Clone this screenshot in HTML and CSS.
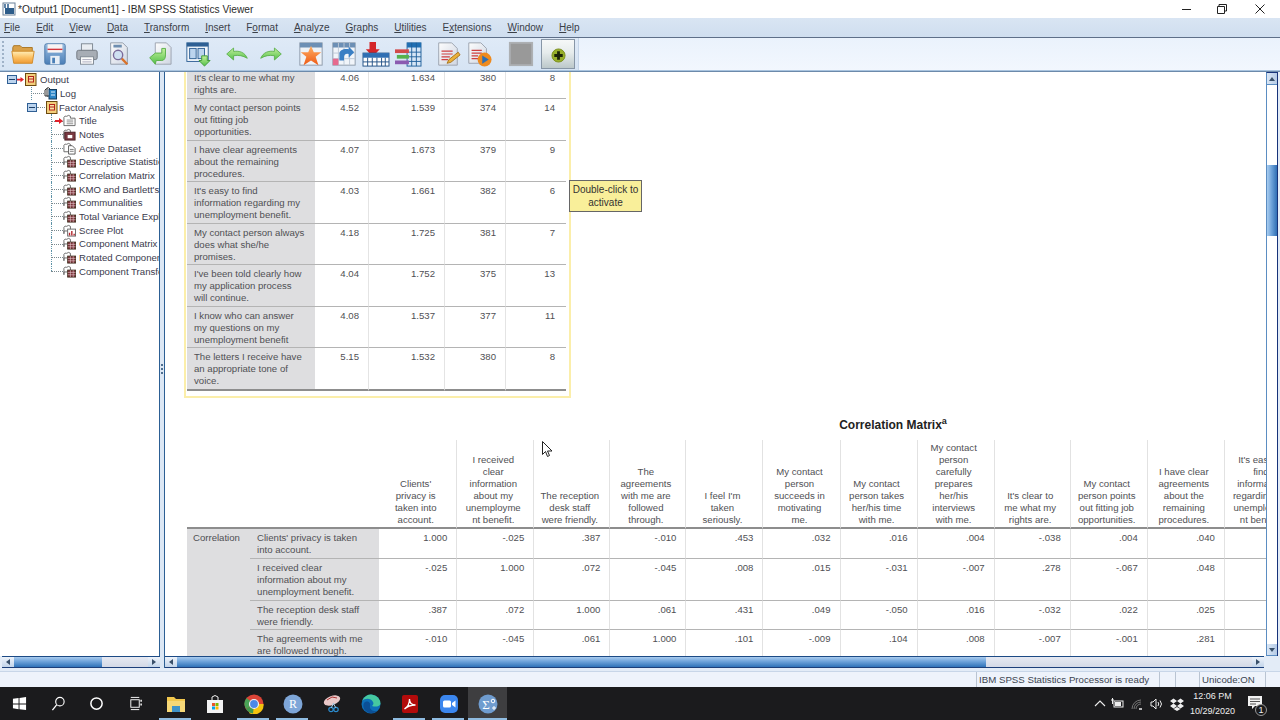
FILE: index.html
```html
<!DOCTYPE html>
<html lang="en">
<head>
<meta charset="utf-8">
<title>*Output1 [Document1] - IBM SPSS Statistics Viewer</title>
<link rel="stylesheet" href="styles.css">
</head>
<body>
<svg class="defs" width="0" height="0" aria-hidden="true">
  <defs>
    <linearGradient id="gFolder" x1="0" y1="0" x2="0" y2="1"><stop offset="0" stop-color="#ffeeb8"/><stop offset=".5" stop-color="#fcc266"/><stop offset="1" stop-color="#ee9a34"/></linearGradient>
    <linearGradient id="gSave" x1="0" y1="0" x2="0" y2="1"><stop offset="0" stop-color="#9cbfe3"/><stop offset="1" stop-color="#4b7fb7"/></linearGradient>
    <linearGradient id="gGreen" x1="0" y1="0" x2="0" y2="1"><stop offset="0" stop-color="#c4f09c"/><stop offset="1" stop-color="#52c04a"/></linearGradient>
    <linearGradient id="gPage" x1="0" y1="0" x2="1" y2="1"><stop offset="0" stop-color="#fdfdfd"/><stop offset="1" stop-color="#cfd6e2"/></linearGradient>
    <linearGradient id="gOrange" x1="0" y1="0" x2="0" y2="1"><stop offset="0" stop-color="#ffb066"/><stop offset="1" stop-color="#ee5a14"/></linearGradient>
    <symbol id="t-group" viewBox="0 0 13 13"><rect x="1.500" y=".5" width="10.500" height="12" fill="#f2cf7c" stroke="#6d4a10"/><rect x="4.500" y="3.500" width="5" height="5.500" fill="#f7e3a6" stroke="#b4231a"/><path d="M5 6h4" stroke="#b4231a"/></symbol>
    <symbol id="t-log" viewBox="0 0 13 13"><path d="M1 9V3Q2 1 4 2V9Z" fill="#fff" stroke="#333"/><path d="M3 1Q5 0 6 2V9H3Z" fill="#fff" stroke="#333"/><rect x="5" y="2.500" width="7.500" height="9.500" fill="#2b85c6" stroke="#123a5c"/><path d="M7 5h4M7 8h4" stroke="#dff1ff"/></symbol>
    <symbol id="t-title" viewBox="0 0 14 13"><path d="M1 11V3Q2 1 4 2Q6 0 8 2V4H13V12H1Z" fill="#fff" stroke="#666"/><path d="M4 6h7M4 8h7M4 10h7" stroke="#8a8a8a"/></symbol>
    <symbol id="t-notes" viewBox="0 0 14 13"><path d="M1 11V3Q2 1 4 2Q6 0 8 2V5H1Z" fill="#fff" stroke="#666"/><rect x="2" y="4" width="11" height="8.500" fill="#7a3941" stroke="#4a2026"/><rect x="5" y="7" width="5" height="3.500" fill="#fff"/></symbol>
    <symbol id="t-text" viewBox="0 0 14 13"><path d="M1 10V3Q2 1 4 2Q6 0 8 2V10Z" fill="#fff" stroke="#666"/><path d="M6 3.500h4l3 3v6H6Z" fill="#fff" stroke="#555"/><path d="M7.500 7.500h4M7.500 9.500h4" stroke="#777"/></symbol>
    <symbol id="t-table" viewBox="0 0 14 13"><path d="M1 10V3Q2 1 4 2Q6 0 8 2V7H1Z" fill="#fff" stroke="#666"/><rect x="5" y="5" width="8.500" height="7.500" fill="#7a2f38" stroke="#432"/><path d="M5 7.500h8.500M5 10h8.500M8 5v7.500M11 5v7.500" stroke="#e9d4d4" stroke-width=".6"/></symbol>
    <symbol id="t-plot" viewBox="0 0 14 13"><path d="M1 10V3Q2 1 4 2Q6 0 8 2V7H1Z" fill="#fff" stroke="#666"/><rect x="5" y="5" width="8.500" height="7.500" fill="#fff" stroke="#666"/><path d="M7 12V9M9.500 12V7M12 12V10" stroke="#b3262c" stroke-width="1.500"/></symbol>
    <symbol id="t-arrow" viewBox="0 0 8 8"><path d="M0 3h4V1l4 3-4 3V5H0Z" fill="#e0202a"/></symbol>
  </defs>
</svg>

<header class="titlebar">
  <svg class="app-ico" viewBox="0 0 14 14" aria-hidden="true"><rect x="1" y="1" width="12" height="12" fill="#fff" stroke="#6b8199"/><rect x="3" y="6" width="9" height="6" fill="#2c5c8a"/><path d="M3 2v4M6 2v4" stroke="#2c5c8a" stroke-width="1.500"/></svg>
  <span class="title-text">*Output1 [Document1] - IBM SPSS Statistics Viewer</span>
  <div class="win-btns">
    <svg class="win-btn win-min" viewBox="0 0 12 12" aria-hidden="true"><path d="M1 6.500h9" stroke="#222"/></svg>
    <svg class="win-btn" viewBox="0 0 12 12" aria-hidden="true"><path d="M3 3V1.500h7.500V8H9M1.500 3.500H8.500V10.500H1.500Z" fill="none" stroke="#222"/></svg>
    <svg class="win-btn" viewBox="0 0 12 12" aria-hidden="true"><path d="M1.500 1.500l9 9M10.500 1.500l-9 9" stroke="#222"/></svg>
  </div>
</header>

<nav class="menubar">
  <span><u>F</u>ile</span><span><u>E</u>dit</span><span><u>V</u>iew</span><span><u>D</u>ata</span><span><u>T</u>ransform</span><span><u>I</u>nsert</span><span>F<u>o</u>rmat</span><span><u>A</u>nalyze</span><span><u>G</u>raphs</span><span><u>U</u>tilities</span><span>E<u>x</u>tensions</span><span><u>W</u>indow</span><span><u>H</u>elp</span>
</nav>

<div class="toolbar">
  <div class="tools">
    <i class="grip"></i>
    <svg class="tool t1" viewBox="0 0 28 28" aria-hidden="true"><path d="M3 7l1-2h7l2 2h11v5H3Z" fill="#d9a048" stroke="#a87420"/><path d="M2 11h24l-2 13H4Z" fill="url(#gFolder)" stroke="#d08a28"/></svg>
    <svg class="tool t2" viewBox="0 0 28 28" aria-hidden="true"><rect x="3" y="3" width="22" height="22" rx="2" fill="url(#gSave)" stroke="#4b78a8"/><rect x="6" y="3.500" width="16" height="9" fill="#f7f4f4"/><path d="M6 9h16" stroke="#d2333c" stroke-width="1.500"/><rect x="9" y="16" width="10" height="9" fill="#e7eef6"/><rect x="11" y="18" width="3" height="6" fill="#4b7fb7"/></svg>
    <svg class="tool t3" viewBox="0 0 28 28" aria-hidden="true"><rect x="8" y="3" width="12" height="8" fill="#e9edf2" stroke="#7d8791"/><rect x="3" y="10" width="22" height="10" rx="2" fill="#a7adb5" stroke="#6f767e"/><rect x="7" y="17" width="14" height="8" fill="#fbfbfb" stroke="#7d8791"/><path d="M9 20h10M9 22.500h10" stroke="#aab"/></svg>
    <svg class="tool t4" viewBox="0 0 28 28" aria-hidden="true"><path d="M5 2h13l5 5v18H5Z" fill="url(#gPage)" stroke="#8f98a5"/><rect x="8" y="4" width="9" height="3" fill="#6e8eb0"/><circle cx="13" cy="15" r="5" fill="#cfe0f2" stroke="#7a6a9a" stroke-width="1.500"/><path d="M17 19l6 6" stroke="#d9722a" stroke-width="2.500"/></svg>
    <svg class="tool t5" viewBox="0 0 28 28" aria-hidden="true"><path d="M10 2h12l5 5v18H10Z" fill="url(#gPage)" stroke="#9aa2ae"/><path d="M17 8v5h-7l-6 5 6 7 1-4h6c3 0 4-3 4-6V8Z" fill="url(#gGreen)" stroke="#5aae4a"/></svg>
    <svg class="tool t6" viewBox="0 0 28 28" aria-hidden="true"><rect x="2" y="2" width="23" height="20" fill="#f2f6fb" stroke="#2d5f94"/><rect x="2" y="2" width="23" height="4" fill="#2d5f94"/><rect x="5" y="8" width="7" height="11" fill="#bcd4ee" stroke="#2d5f94"/><rect x="14" y="8" width="7" height="11" fill="#bcd4ee" stroke="#2d5f94"/><path d="M18 16h6v5h3l-6 6-6-6h3Z" fill="url(#gGreen)" stroke="#3c9a36"/></svg>
    <svg class="tool t7" viewBox="0 0 28 28" aria-hidden="true"><path d="M2 14l8-7v4c7-1 13 1 16 8-5-3-10-4-16-3v5Z" fill="url(#gGreen)" stroke="#5aae4a"/></svg>
    <svg class="tool t8" viewBox="0 0 28 28" aria-hidden="true"><path d="M26 14l-8-7v4c-7-1-13 1-16 8 5-3 10-4 16-3v5Z" fill="url(#gGreen)" stroke="#5aae4a"/></svg>
    <svg class="tool t9" viewBox="0 0 28 28" aria-hidden="true"><rect x="2" y="2" width="24" height="24" fill="#eef2f7" stroke="#8c99a8"/><rect x="2" y="2" width="24" height="5" fill="#6c8fb5"/><path d="M14 5l3 7h8l-6 5 3 9-8-5-8 5 3-9-6-5h8Z" fill="url(#gOrange)"/></svg>
    <svg class="tool t10" viewBox="0 0 28 28" aria-hidden="true"><rect x="2" y="2" width="24" height="24" fill="#f1f5fa" stroke="#8c99a8"/><rect x="2" y="2" width="24" height="5" fill="#6c8fb5"/><path d="M2 13h24M2 19h24M8 2v24M14 2v24M20 2v24" stroke="#bcc8d6"/><rect x="2" y="19" width="6" height="7" fill="#e66a8e"/><path d="M9 21v-7c0-4 5-6 10-5V6l6 6-6 6v-4c-3-1-5 1-5 3v4Z" fill="#3a7fc4"/></svg>
    <svg class="tool t11" viewBox="0 0 30 28" aria-hidden="true"><path d="M8 1h7v8h4l-7.500 8L4 9h4Z" fill="#d4262a"/><rect x="1" y="13" width="28" height="14" fill="#fff" stroke="#1f4f85"/><rect x="1" y="13" width="28" height="5" fill="#2f6fb3"/><path d="M1 22.500h28M6 18v9M11 18v9M16 18v9M21 18v9M25 18v9" stroke="#1f4f85"/></svg>
    <svg class="tool t12" viewBox="0 0 30 28" aria-hidden="true"><rect x="14" y="2" width="15" height="25" fill="#d6e6f6" stroke="#1f5f9a"/><rect x="14" y="2" width="15" height="5" fill="#1f6fb3"/><path d="M14 12h15M14 17h15M14 22h15M19 2v25M24 2v25" stroke="#1f5f9a"/><rect x="1" y="9" width="15" height="4" fill="#d24a4a"/><rect x="3" y="15" width="13" height="4" fill="#56b14e"/><rect x="1" y="21" width="15" height="4" fill="#8b5bb0"/></svg>
    <svg class="tool t13" viewBox="0 0 28 28" aria-hidden="true"><path d="M4 2h14l6 6v18H4Z" fill="url(#gPage)" stroke="#9aa2ae"/><path d="M7 11h12M7 14h12M7 17h9M7 20h7" stroke="#cf4040" stroke-width="1.300"/><path d="M13 24l2-4 10-8 2 3-10 8Z" fill="#eab13a" stroke="#a9741c"/></svg>
    <svg class="tool t14" viewBox="0 0 28 28" aria-hidden="true"><path d="M3 2h13l6 6v16H3Z" fill="url(#gPage)" stroke="#9aa2ae"/><path d="M6 10h11M6 13h11M6 16h7M6 19h7" stroke="#cf4040" stroke-width="1.300"/><circle cx="20" cy="20" r="7.500" fill="#ee8a1e"/><path d="M17.500 15.500l7 4.500-7 4.500Z" fill="#2f6fb3"/></svg>
    <svg class="tool t15" viewBox="0 0 28 28" aria-hidden="true"><rect x="2" y="2" width="24" height="24" fill="#999" stroke="#adb0b3" stroke-width="2"/></svg>
    <div class="tool-active"><svg class="plus" viewBox="0 0 16 16" aria-hidden="true"><circle cx="8" cy="8" r="7" fill="#98b02a" stroke="#7c8f20"/><path d="M8 3.500v9M3.500 8h9" stroke="#1c2408" stroke-width="3"/></svg></div>
  </div>
</div>

<main class="main">
  <aside class="left">
    <div class="tree">
      <div class="row root"><svg class="toggle" viewBox="0 0 10 9" aria-hidden="true"><rect x=".5" y=".5" width="9" height="8" fill="#bcd4ee" stroke="#2f5f94"/><path d="M2 4.500h6" stroke="#1d3f66"/></svg><svg class="ra" aria-hidden="true"><use href="#t-arrow"/></svg><svg class="ic" aria-hidden="true"><use href="#t-group"/></svg><span class="lb">Output</span></div>
      <div class="row log"><i class="guide"></i><svg class="ic" aria-hidden="true"><use href="#t-log"/></svg><span class="lb">Log</span></div>
      <div class="row group"><svg class="toggle" viewBox="0 0 10 9" aria-hidden="true"><rect x=".5" y=".5" width="9" height="8" fill="#bcd4ee" stroke="#2f5f94"/><path d="M2 4.500h6" stroke="#1d3f66"/></svg><i class="dash"></i><svg class="ic" aria-hidden="true"><use href="#t-group"/></svg><span class="lb">Factor Analysis</span></div>
      <div class="row leaf"><i class="guide"><svg class="ga" aria-hidden="true"><use href="#t-arrow"/></svg></i><svg class="ic" aria-hidden="true"><use href="#t-title"/></svg><span class="lb">Title</span></div>
      <div class="row leaf"><i class="guide"></i><svg class="ic" aria-hidden="true"><use href="#t-notes"/></svg><span class="lb">Notes</span></div>
      <div class="row leaf"><i class="guide"></i><svg class="ic" aria-hidden="true"><use href="#t-text"/></svg><span class="lb">Active Dataset</span></div>
      <div class="row leaf"><i class="guide"></i><svg class="ic" aria-hidden="true"><use href="#t-table"/></svg><span class="lb">Descriptive Statistics</span></div>
      <div class="row leaf"><i class="guide"></i><svg class="ic" aria-hidden="true"><use href="#t-table"/></svg><span class="lb">Correlation Matrix</span></div>
      <div class="row leaf"><i class="guide"></i><svg class="ic" aria-hidden="true"><use href="#t-table"/></svg><span class="lb">KMO and Bartlett's Test</span></div>
      <div class="row leaf"><i class="guide"></i><svg class="ic" aria-hidden="true"><use href="#t-table"/></svg><span class="lb">Communalities</span></div>
      <div class="row leaf"><i class="guide"></i><svg class="ic" aria-hidden="true"><use href="#t-table"/></svg><span class="lb">Total Variance Explained</span></div>
      <div class="row leaf"><i class="guide"></i><svg class="ic" aria-hidden="true"><use href="#t-plot"/></svg><span class="lb">Scree Plot</span></div>
      <div class="row leaf"><i class="guide"></i><svg class="ic" aria-hidden="true"><use href="#t-table"/></svg><span class="lb">Component Matrix</span></div>
      <div class="row leaf"><i class="guide"></i><svg class="ic" aria-hidden="true"><use href="#t-table"/></svg><span class="lb">Rotated Component Matrix</span></div>
      <div class="row leaf"><i class="guide last"></i><svg class="ic" aria-hidden="true"><use href="#t-table"/></svg><span class="lb">Component Transformation</span></div>
    </div>
    <div class="hscroll">
      <span class="sb-btn"><i class="tri-l"></i></span><span class="sb-blue left-blue"></span><span class="sb-light"></span><span class="sb-btn"><i class="tri-r"></i></span>
    </div>
  </aside>
  <div class="splitter"><i></i></div>
  <section class="right">
    <div class="right-top">
      <div class="viewer">
        <div class="doc">
          <div class="active-box">
            <table class="t1-table">
              <colgroup><col class="c128"><col class="c54"><col class="c76"><col class="c61"><col class="c60"></colgroup>
              <tbody>
                <tr><th>It's clear to me what my<br>rights are.</th><td>4.06</td><td>1.634</td><td>380</td><td>8</td></tr>
                <tr><th>My contact person points<br>out fitting job<br>opportunities.</th><td>4.52</td><td>1.539</td><td>374</td><td>14</td></tr>
                <tr><th>I have clear agreements<br>about the remaining<br>procedures.</th><td>4.07</td><td>1.673</td><td>379</td><td>9</td></tr>
                <tr><th>It's easy to find<br>information regarding my<br>unemployment benefit.</th><td>4.03</td><td>1.661</td><td>382</td><td>6</td></tr>
                <tr><th>My contact person always<br>does what she/he<br>promises.</th><td>4.18</td><td>1.725</td><td>381</td><td>7</td></tr>
                <tr><th>I've been told clearly how<br>my application process<br>will continue.</th><td>4.04</td><td>1.752</td><td>375</td><td>13</td></tr>
                <tr><th>I know who can answer<br>my questions on my<br>unemployment benefit</th><td>4.08</td><td>1.537</td><td>377</td><td>11</td></tr>
                <tr><th>The letters I receive have<br>an appropriate tone of<br>voice.</th><td>5.15</td><td>1.532</td><td>380</td><td>8</td></tr>
              </tbody>
            </table>
            <div class="tip">Double-click to<br>activate</div>
          </div>
          <h2 class="corr-title">Correlation Matrix<sup>a</sup></h2>
          <table class="corr">
            <colgroup><col class="c63"><col class="c129"><col class="c78"><col class="c77"><col class="c76"><col class="c76"><col class="c77"><col class="c77"><col class="c77"><col class="c77"><col class="c76"><col class="c77"><col class="c77"><col class="c77"></colgroup>
            <thead>
              <tr>
                <th class="blank" colspan="2"></th>
                <th>Clients'<br>privacy is<br>taken into<br>account.</th>
                <th>I received<br>clear<br>information<br>about my<br>unemployme<br>nt benefit.</th>
                <th>The reception<br>desk staff<br>were friendly.</th>
                <th>The<br>agreements<br>with me are<br>followed<br>through.</th>
                <th>I feel I'm<br>taken<br>seriously.</th>
                <th>My contact<br>person<br>succeeds in<br>motivating<br>me.</th>
                <th>My contact<br>person takes<br>her/his time<br>with me.</th>
                <th>My contact<br>person<br>carefully<br>prepares<br>her/his<br>interviews<br>with me.</th>
                <th>It's clear to<br>me what my<br>rights are.</th>
                <th>My contact<br>person points<br>out fitting job<br>opportunities.</th>
                <th>I have clear<br>agreements<br>about the<br>remaining<br>procedures.</th>
                <th>It's easy to<br>find<br>information<br>regarding my<br>unemployme<br>nt benefit.</th>
              </tr>
            </thead>
            <tbody>
              <tr class="r2a"><th class="grp" rowspan="4">Correlation</th><th class="lab">Clients' privacy is taken<br>into account.</th><td>1.000</td><td>-.025</td><td>.387</td><td>-.010</td><td>.453</td><td>.032</td><td>.016</td><td>.004</td><td>-.038</td><td>.004</td><td>.040</td><td></td></tr>
              <tr class="r3"><th class="lab">I received clear<br>information about my<br>unemployment benefit.</th><td>-.025</td><td>1.000</td><td>.072</td><td>-.045</td><td>.008</td><td>.015</td><td>-.031</td><td>-.007</td><td>.278</td><td>-.067</td><td>.048</td><td></td></tr>
              <tr class="r2"><th class="lab">The reception desk staff<br>were friendly.</th><td>.387</td><td>.072</td><td>1.000</td><td>.061</td><td>.431</td><td>.049</td><td>-.050</td><td>.016</td><td>-.032</td><td>.022</td><td>.025</td><td></td></tr>
              <tr class="r2"><th class="lab">The agreements with me<br>are followed through.</th><td>-.010</td><td>-.045</td><td>.061</td><td>1.000</td><td>.101</td><td>-.009</td><td>.104</td><td>.008</td><td>-.007</td><td>-.001</td><td>.281</td><td></td></tr>
            </tbody>
          </table>
        </div>
        <svg class="cursor" viewBox="0 0 11 17" aria-hidden="true"><path d="M.5.500v13l3-3 2 5 2-1-2-4.500h4.500Z" fill="#fff" stroke="#222"/></svg>
      </div>
      <div class="vscroll">
        <span class="vb-btn"><i class="tri-u"></i></span><span class="vb-white vb-a"></span><span class="vb-blue"></span><span class="vb-white vb-b"></span><span class="vb-btn"><i class="tri-d"></i></span>
      </div>
    </div>
    <div class="hscroll hscroll-r">
      <span class="sb-btn"><i class="tri-l"></i></span><span class="sb-blue right-blue"></span><span class="sb-light"></span><span class="sb-btn"><i class="tri-r"></i></span>
    </div>
  </section>
</main>

<footer class="status">
  <span class="st st-a">IBM SPSS Statistics Processor is ready</span><span class="st st-b"></span><span class="st st-c"></span><span class="st st-d">Unicode:ON</span>
</footer>

<div class="taskbar">
  <div class="task-left">
    <span class="ti"><svg class="ticon" viewBox="0 0 16 16" aria-hidden="true"><path d="M1 3l6-1v6H1ZM8 2l7-1v7H8ZM1 9h6v5l-6-1ZM8 9h7v6l-7-1Z" fill="#fff"/></svg></span>
    <span class="ti"><svg class="ticon" viewBox="0 0 16 16" aria-hidden="true"><circle cx="9.500" cy="6" r="4.500" fill="none" stroke="#fff" stroke-width="1.200"/><path d="M6 9.500L1.500 15" stroke="#fff" stroke-width="1.400"/></svg></span>
    <span class="ti ti-tight"><svg class="ticon" viewBox="0 0 16 16" aria-hidden="true"><circle cx="8" cy="8" r="6" fill="none" stroke="#fff" stroke-width="1.600"/></svg></span>
    <span class="ti ti-tight"><svg class="ticon" viewBox="0 0 16 16" aria-hidden="true"><path d="M3 1.500h9M3 14.500h9" stroke="#fff"/><rect x="3" y="4" width="9" height="8" fill="none" stroke="#fff"/><path d="M14 4v2M14 8v2" stroke="#fff" stroke-width="1.500"/></svg></span>
    <span class="ti on"><svg class="ticon big" viewBox="0 0 20 20" aria-hidden="true"><path d="M1 3h7l2 2h9v13H1Z" fill="#f2c84e"/><rect x="1" y="7" width="18" height="11" fill="#f6d877"/><rect x="6" y="12" width="8" height="6" fill="#3f93c9"/></svg></span>
    <span class="ti"><svg class="ticon big" viewBox="0 0 20 20" aria-hidden="true"><path d="M2 6h16v13H2Z" fill="#f3f3f3"/><path d="M7 6V3q3-3 6 0v3" fill="none" stroke="#f3f3f3"/><rect x="7" y="9" width="3" height="3" fill="#e8542a"/><rect x="10.500" y="9" width="3" height="3" fill="#7fba00"/><rect x="7" y="12.500" width="3" height="3" fill="#00a4ef"/><rect x="10.500" y="12.500" width="3" height="3" fill="#ffb900"/></svg></span>
    <span class="ti on"><svg class="ticon big" viewBox="0 0 20 20" aria-hidden="true"><circle cx="10" cy="10" r="9.500" fill="#db4437"/><path d="M10 10L2 15A9.500 9.500 0 0 1 2.600 4L10 10Z" fill="#4aa356"/><path d="M10 10l-5 9A9.500 9.500 0 0 0 19.500 10Z" fill="#f4c20d"/><path d="M10 10l-8 5A9.500 9.500 0 0 0 9 19.500Z" fill="#3f9a4e"/><circle cx="10" cy="10" r="4.500" fill="#4a88e8" stroke="#eee" stroke-width="1.200"/></svg></span>
    <span class="ti on"><svg class="ticon big" viewBox="0 0 20 20" aria-hidden="true"><circle cx="10" cy="10" r="9.500" fill="#7ea6d8"/><text x="10" y="14" text-anchor="middle" class="r-letter">R</text></svg></span>
    <span class="ti"><svg class="ticon big" viewBox="0 0 20 20" aria-hidden="true"><ellipse cx="10" cy="6.500" rx="8.500" ry="4.500" fill="#e9c8c8" transform="rotate(-20 10 6.500)"/><path d="M5 6l5-3 5 1" fill="none" stroke="#a33"/><circle cx="9" cy="15.500" r="2.200" fill="none" stroke="#2c8dd0" stroke-width="1.200"/><circle cx="14" cy="15.500" r="2.200" fill="none" stroke="#2c8dd0" stroke-width="1.200"/><path d="M9 14l3-5M14 14l-3-5" stroke="#9fc6e0"/></svg></span>
    <span class="ti"><svg class="ticon big" viewBox="0 0 20 20" aria-hidden="true"><circle cx="10" cy="10" r="9.500" fill="#0d6fb8"/><path d="M19.500 10A9.500 9.500 0 0 0 1 7c3-3 9-3 11 1 1 2 0 3-1 4 3 1 7 1 8.500-2Z" fill="#46c9a0"/><path d="M3 9c3-3 7-1 6 3-1 3 3 6 7 5-3 3-8 3-11 0-3-2-3-6-2-8Z" fill="#0b4f95"/></svg></span>
    <span class="ti on2"><svg class="ticon big" viewBox="0 0 20 20" aria-hidden="true"><rect x="2" y="1" width="16" height="18" rx="2" fill="#b30b0b"/><path d="M4.500 15c3-2 5-6 5-10 0 4 2 6 6 6-4 0-8 1-11 4Z" fill="none" stroke="#fff" stroke-width="1.300"/></svg></span>
    <span class="ti on2"><svg class="ticon big" viewBox="0 0 20 20" aria-hidden="true"><rect x="1" y="1" width="18" height="18" rx="5" fill="#3b86ee"/><rect x="4" y="6.500" width="8" height="7" rx="1.500" fill="#fff"/><path d="M13 9l3.500-2.500v7L13 11Z" fill="#fff"/></svg></span>
    <span class="ti active"><svg class="ticon big" viewBox="0 0 20 20" aria-hidden="true"><circle cx="10" cy="10" r="9.500" fill="#6f9ccf"/><text x="8" y="14.500" text-anchor="middle" class="sigma">Σ</text><circle cx="15" cy="7" r="1.800" fill="none" stroke="#fff"/><path d="M14 14h4M16 12v4" stroke="#fff"/></svg></span>
  </div>
  <div class="tray">
    <svg class="tray-i tray-chev" viewBox="0 0 14 14" aria-hidden="true"><path d="M2 9l5-5 5 5" fill="none" stroke="#eee" stroke-width="1.100"/></svg>
    <svg class="tray-i" viewBox="0 0 14 14" aria-hidden="true"><rect x="4" y="4" width="9" height="6" fill="none" stroke="#eee"/><rect x="5" y="5" width="6" height="4" fill="#eee"/><path d="M1 3h3M2.500 1v6" stroke="#eee"/></svg>
    <svg class="tray-i" viewBox="0 0 14 14" aria-hidden="true"><path d="M2 12a9 9 0 0 1 9-9M4 12a7 7 0 0 1 7-7M6 12a5 5 0 0 1 5-5" fill="none" stroke="#777"/><path d="M9 12h3" stroke="#eee" stroke-width="1.500"/></svg>
    <svg class="tray-i" viewBox="0 0 14 14" aria-hidden="true"><path d="M1 5h2l3-3v10L3 9H1Z" fill="none" stroke="#eee"/><path d="M8 5q1.500 2 0 4M10 3.500q3 3.500 0 7" fill="none" stroke="#eee"/></svg>
    <svg class="tray-i" viewBox="0 0 14 14" aria-hidden="true"><path d="M3.500 1.500L7 4 3.500 6.500 0 4ZM10.500 1.500L14 4l-3.500 2.500L7 4ZM3.500 6.500L7 9l-3.500 2.500L0 9ZM10.500 6.500L14 9l-3.500 2.500L7 9ZM3.500 12L7 10l3.500 2L7 14Z" fill="#eee"/></svg>
    <div class="clock"><span>12:06 PM</span><span>10/29/2020</span></div>
    <div class="notify">
      <svg class="notify-i" viewBox="0 0 16 16" aria-hidden="true"><path d="M1 2h14v10H8l-3 3v-3H1Z" fill="#f2f2f2"/><path d="M3 5h10M3 7.500h10M3 10h6" stroke="#555"/></svg>
      <span class="badge">1</span>
    </div>
  </div>
</div>
</body>
</html>
```

FILE: styles.css
```css
* { box-sizing: border-box; }
html, body { margin: 0; padding: 0; }
body {
  width: 1280px;
  height: 720px;
  overflow: hidden;
  display: flex;
  flex-direction: column;
  font-family: "Liberation Sans", Arial, sans-serif;
  background: #fff;
  color: #333;
}
.defs { position: absolute; }

/* title bar */
.titlebar { height: 18px; display: flex; align-items: center; background: #fff; flex: none; }
.app-ico { width: 14px; height: 14px; margin-left: 2px; }
.title-text { margin-left: 2px; font-size: 10.2px; color: #2b2b2b; white-space: nowrap; }
.win-btns { margin-left: auto; display: flex; gap: 26px; padding-right: 14px; }
.win-btn { width: 12px; height: 12px; display: block; }
.win-min { margin-right: -3px; }

/* menu */
.menubar {
  height: 20px;
  flex: none;
  display: flex;
  align-items: center;
  gap: 16px;
  padding-left: 4px;
  font-size: 10px;
  color: #3a4048;
  background: linear-gradient(#d9e5f3, #cfdeef);
  border-bottom: 1px solid #5e6f88;
}

/* toolbar */
.toolbar {
  height: 33px;
  flex: none;
  background: linear-gradient(#eaf2fc, #f2f7fe);
  border-bottom: 1px solid #a9c4df;
}
.tools {
  width: 579px;
  height: 100%;
  display: flex;
  align-items: center;
  background: linear-gradient(#dfeaf7, #d6e4f4);
  border-right: 1px solid #c5d5e8;
  position: relative;
}
.grip { width: 2px; height: 26px; margin-left: 2px; border-left: 2px dotted #9fb2c8; }
.tool { display: block; width: 26px; height: 26px; flex: none; }
.t1 { margin-left: 6px; }
.t2 { margin-left: 6px; }
.t3 { margin-left: 6px; }
.t4 { margin-left: 6px; }
.t5 { margin-left: 14px; }
.t6 { margin-left: 13px; }
.t7 { margin-left: 14px; width: 24px; }
.t8 { margin-left: 10px; width: 24px; }
.t9 { margin-left: 15px; }
.t10 { margin-left: 7px; }
.t11 { margin-left: 5px; width: 28px; }
.t12 { margin-left: 4px; width: 28px; }
.t13 { margin-left: 13px; }
.t14 { margin-left: 5px; }
.t15 { margin-left: 16px; }
.tool-active {
  margin-left: 7px;
  width: 34px;
  height: 30px;
  display: flex;
  align-items: center;
  justify-content: center;
  padding-top: 3px;
  border: 1px solid #8796a6;
  background: linear-gradient(#f6f8f8, #e6ecec 45%, #bcc8ca);
}
.plus { width: 15px; height: 15px; }

/* main area */
.main {
  height: 600px;
  flex: none;
  display: flex;
  background: #e3ecf7;
  padding-bottom: 3px;
  border-top: 1px solid #6c8aab;
}
.left { width: 160px; flex: none; display: flex; flex-direction: column; padding-left: 2px; }
.tree {
  flex: 1;
  background: #fff;
  overflow: hidden;
  padding-top: 1px;
  margin-left: -2px;
  border-right: 1px solid #2c5f94;
  font-size: 9.6px;
  color: #3a3a4c;
}
.row { height: 13.67px; display: flex; align-items: center; white-space: nowrap; }
.root { padding-left: 7px; }
.log { padding-left: 31px; }
.group { padding-left: 27px; }
.leaf { padding-left: 51px; }
.toggle { width: 10px; height: 9px; flex: none; }
.ra { width: 7px; height: 7px; flex: none; }
.ic { width: 13px; height: 13px; flex: none; }
.root .lb { margin-left: 3px; }
.log .lb { margin-left: 3px; }
.group .lb { margin-left: 1px; }
.leaf .lb { margin-left: 3px; }
.guide { position: relative; align-self: stretch; flex: none; width: 12px; }
.log .guide { width: 13px; }
.guide::before { content: ""; position: absolute; left: 0; top: 0; bottom: 0; border-left: 1px dotted #5e93a8; }
.guide::after { content: ""; position: absolute; left: 0; right: 0; top: 50%; border-top: 1px dotted #7a8a90; }
.guide.last::before { bottom: 50%; }
.ga { position: absolute; left: 4px; top: 3px; width: 8px; height: 8px; z-index: 1; }
.dash { width: 8px; border-top: 1px dotted #7a8a90; flex: none; }

.splitter { width: 5px; flex: none; background: #dce7f4; border-right: 1px solid #2c5f94; position: relative; }
.splitter i { position: absolute; left: 1px; top: 292px; width: 2px; height: 10px; border-left: 2px dotted #4f6f90; }

/* scrollbars */
.hscroll {
  height: 12px;
  flex: none;
  display: flex;
  border-top: 1px solid #1c4a85;
  border-bottom: 1px solid #1c3f7a;
  background: #dfe6f1;
}
.hscroll-r { width: 1099px; }
.sb-btn {
  width: 12px;
  flex: none;
  display: flex;
  align-items: center;
  justify-content: center;
  background: linear-gradient(#eef3fa, #c3d5ea);
}
.sb-blue { flex: none; background: linear-gradient(#a9cbee, #6ea3da 45%, #2f72b8); }
.left-blue { width: 88px; }
.right-blue { width: 809px; }
.sb-light { flex: 1; background: linear-gradient(#e6e9f2, #d3d9e6); }
.tri-l, .tri-r, .tri-u, .tri-d { display: block; width: 0; height: 0; border: 3px solid transparent; }
.tri-l { border-right: 4px solid #39506a; border-left: 0; }
.tri-r { border-left: 4px solid #39506a; border-right: 0; }
.tri-u { border-bottom: 4px solid #39506a; border-top: 0; }
.tri-d { border-top: 4px solid #39506a; border-bottom: 0; }

.right { flex: 1; min-width: 0; display: flex; flex-direction: column; }
.right-top { flex: 1; min-height: 0; display: flex; padding-right: 2px; }
.viewer { flex: 1; min-width: 0; overflow: hidden; background: #fff; position: relative; }
.vscroll {
  width: 12px;
  flex: none;
  display: flex;
  flex-direction: column;
  border-left: 1px solid #5b8dc2;
  border-right: 1px solid #17337a;
  border-top: 1px solid #17337a;
  background: #fff;
}
.vb-btn {
  height: 12px;
  flex: none;
  display: flex;
  align-items: center;
  justify-content: center;
  background: linear-gradient(90deg, #d9e6f5, #b5cbe6);
  border-bottom: 1px solid #5b8dc2;
}
.vb-white { background: #fff; }
.vb-a { height: 80px; flex: none; }
.vb-blue { height: 71px; flex: none; background: linear-gradient(90deg, #a9cdf0, #6ea3da 45%, #2f6fb5); }
.vb-b { flex: 1; }

/* document */
.doc { margin-top: -4px; font-size: 9.6px; line-height: 12px; color: #505054; }
.active-box {
  position: relative;
  width: 387px;
  margin-left: 19px;
  padding: 0 3px 5px 1px;
  border: 2px solid #fbeeaa;
  border-top: 0;
}
table { border-collapse: separate; border-spacing: 0; table-layout: fixed; }
th { font-weight: 400; }
.t1-table { width: 379px; }
.c128 { width: 128px; } .c54 { width: 54px; } .c61 { width: 61px; } .c60 { width: 60px; }
.c63 { width: 63px; } .c129 { width: 129px; } .c76 { width: 76px; } .c77 { width: 77px; } .c78 { width: 78px; }
.t1-table th {
  background: #dedee0;
  text-align: left;
  vertical-align: top;
  padding: 3px 0 2px 7px;
  border-top: 1px solid #b4b4b4;
  white-space: nowrap;
}
.t1-table td {
  text-align: right;
  vertical-align: top;
  padding: 3px 9px 2px 0;
  border-top: 1px solid #b4b4b4;
  border-right: 1px solid #e4e4e4;
}
.t1-table td:last-child { border-right: 0; padding-right: 11px; }
.t1-table tr:first-child th, .t1-table tr:first-child td { border-top: 0; padding-top: 4px; }
.t1-table tr:nth-child(odd):not(:first-child) th,
.t1-table tr:nth-child(odd):not(:first-child) td { padding-bottom: 1px; }
.t1-table tr:last-child th, .t1-table tr:last-child td { border-bottom: 2px solid #8d8d8d; }
.tip {
  position: absolute;
  left: 383px;
  top: 112px;
  width: 73px;
  height: 32px;
  padding-top: 2px;
  font-size: 10px;
  line-height: 13px;
  text-align: center;
  color: #333;
  background: #f9ef9a;
  border: 1px solid #666;
}
.corr-title {
  margin: 18px 0 6px 22px;
  width: 1412px;
  height: 18px;
  font-size: 12px;
  line-height: 18px;
  font-weight: 700;
  text-align: center;
  color: #222;
}
.corr-title sup { font-size: 9px; line-height: 0; }
.corr { width: 1115px; margin-left: 22px; }
.corr thead th {
  vertical-align: bottom;
  text-align: center;
  padding: 2px 4px 1px 0;
  border-bottom: 2px solid #8d8d8d;
  border-right: 1px solid #e2e2e2;
  white-space: nowrap;
}
.corr thead .blank { border-right: 0; }
.corr tbody th { background: #dedee0; text-align: left; vertical-align: top; white-space: nowrap; padding: 3px 0 2px 7px; }
.corr .grp { padding-left: 6px; }
.corr td {
  text-align: right;
  vertical-align: top;
  padding: 3px 9px 2px 0;
  border-right: 1px solid #e2e2e2;
}
.corr tr + tr th.lab, .corr tr + tr td { border-top: 1px solid #b4b4b4; }
.corr tr.r2 th.lab, .corr tr.r2 td { padding-bottom: 1px; }

.cursor { position: absolute; left: 377px; top: 369px; width: 11px; height: 17px; }

/* status */
.status {
  height: 16px;
  flex: none;
  display: flex;
  justify-content: flex-end;
  padding-right: 14px;
  font-size: 9.7px;
  line-height: 15px;
  color: #3c4450;
  background: #eef3fb;
  border-top: 1px solid #c8d6e8;
}
.st { border-left: 1px solid #b9c4d2; padding-left: 2px; white-space: nowrap; }
.st-a { width: 183px; }
.st-b { width: 16px; }
.st-c { width: 24px; }
.st-d { width: 67px; border-right: 1px solid #b9c4d2; }

/* taskbar */
.taskbar {
  height: 33px;
  flex: none;
  display: flex;
  justify-content: space-between;
  background: #1b1b1d;
}
.task-left { display: flex; }
.ti {
  width: 39px;
  height: 33px;
  display: flex;
  align-items: center;
  justify-content: center;
  position: relative;
}
.ti-tight { padding-right: 2px; }
.ti.on::after, .ti.on2::after, .ti.active::after {
  content: "";
  position: absolute;
  left: 3px;
  right: 4px;
  bottom: 0;
  height: 2px;
  background: #8fbbe0;
}
.ti.active { background: #3e3e40; }
.ti.active::after { left: 0; right: 0; }
.ticon { width: 15px; height: 15px; }
.ticon.big { width: 20px; height: 20px; }
.r-letter { font-family: "Liberation Serif", serif; font-size: 12px; fill: #fff; }
.sigma { font-family: "Liberation Serif", serif; font-size: 13px; fill: #fff; }
.tray { display: flex; align-items: center; color: #eee; padding-right: 15px; }
.tray-i { width: 14px; height: 14px; margin-right: 6px; }
.tray-chev { margin-right: 3px; }
.clock {
  display: flex;
  flex-direction: column;
  align-items: center;
  width: 45px;
  font-size: 9px;
  line-height: 15px;
}
.notify { position: relative; width: 18px; height: 20px; margin-left: 12px; }
.notify-i { width: 16px; height: 16px; display: block; }
.badge {
  position: absolute;
  right: -2px;
  bottom: -2px;
  width: 12px;
  height: 12px;
  font-size: 9px;
  line-height: 11px;
  text-align: center;
  border: 1px solid #999;
  border-radius: 50%;
  background: #1b1b1d;
}
```
